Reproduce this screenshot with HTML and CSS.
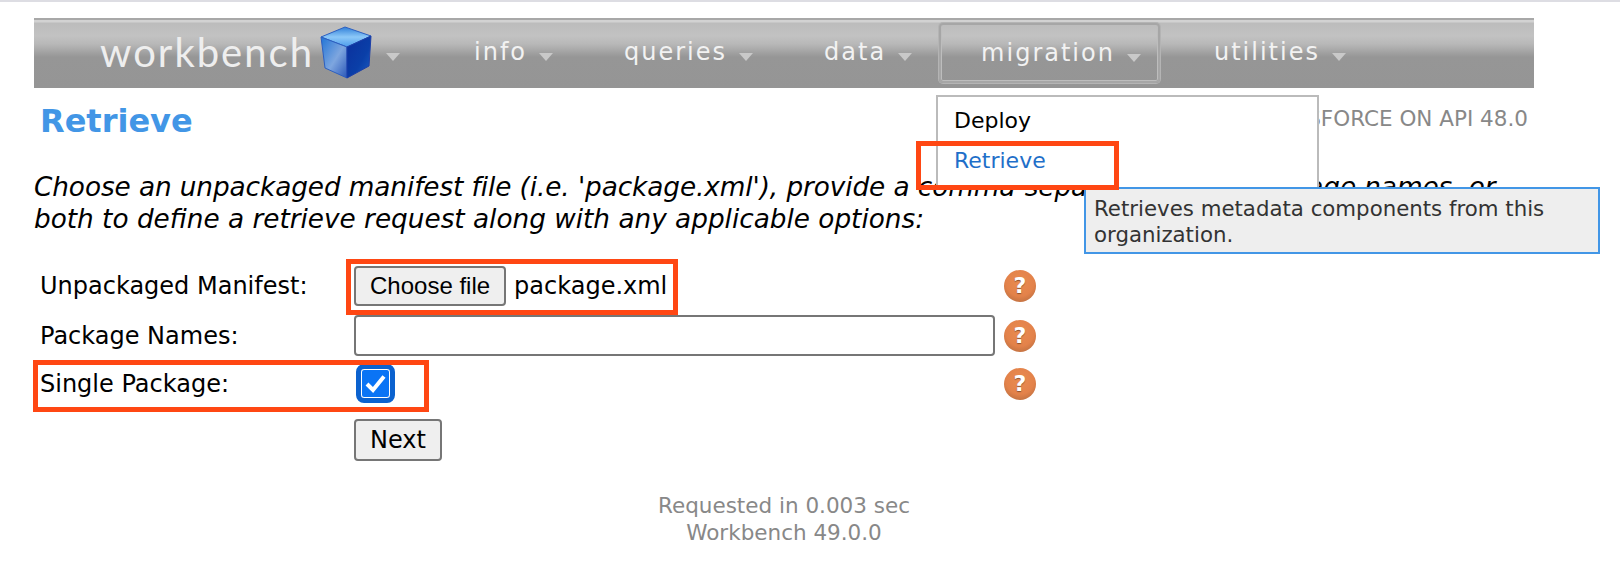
FILE: index.html
```html
<!DOCTYPE html>
<html lang="en">
<head>
  <meta charset="UTF-8">
  <title>Workbench - Retrieve</title>
  <link rel="stylesheet" href="styles.css">
</head>
<body>
  <div class="page">
    <div class="navbar">
      <div class="logo">
        <span class="logo-text">workbench</span>
        <svg class="cube" width="56" height="56" viewBox="0 0 56 56">
          <defs>
            <linearGradient id="cube-top" x1="0" y1="0" x2="0" y2="1">
              <stop offset="0" stop-color="#2f7fd8"/>
              <stop offset="0.5" stop-color="#8cc8f8"/>
              <stop offset="1" stop-color="#4c9cea"/>
            </linearGradient>
            <linearGradient id="cube-left" x1="0" y1="0" x2="1" y2="1">
              <stop offset="0" stop-color="#1f74d6"/>
              <stop offset="0.55" stop-color="#7ea6df"/>
              <stop offset="1" stop-color="#2a57b8"/>
            </linearGradient>
            <linearGradient id="cube-right" x1="0" y1="0" x2="1" y2="1">
              <stop offset="0" stop-color="#0c2f9c"/>
              <stop offset="0.6" stop-color="#0a3fa8"/>
              <stop offset="1" stop-color="#1d5fc4"/>
            </linearGradient>
          </defs>
          <path d="M27 2 L53 11 L29 22 L3 12 Z" fill="url(#cube-top)" stroke="#2d5fc0" stroke-width="1"/>
          <path d="M3 12 L29 22 L29 53 L7 43 Z" fill="url(#cube-left)" stroke="#2d5fc0" stroke-width="1"/>
          <path d="M29 22 L53 11 L51 41 L29 53 Z" fill="url(#cube-right)" stroke="#1d3fa8" stroke-width="1"/>
        </svg>
        <span class="arrow"></span>
      </div>
      <div class="nav-item">info<span class="arrow"></span></div>
      <div class="nav-item">queries<span class="arrow"></span></div>
      <div class="nav-item">data<span class="arrow"></span></div>
      <div class="nav-item active">migration<span class="arrow"></span></div>
      <div class="nav-item">utilities<span class="arrow"></span></div>
    </div>

    <div class="menu">
      <div class="menu-item">Deploy</div>
      <div class="menu-item selected">Retrieve</div>
    </div>
    <div class="tooltip">Retrieves metadata components from this organization.</div>

    <div class="title-row">
      <h1>Retrieve</h1>
      <div class="login-info">SALESFORCE ON API 48.0</div>
    </div>

    <p class="intro"><span class="intro-first">Choose an unpackaged manifest file (i.e. 'package.xml'), provide a comma-separated list of package names, or</span> both to define a retrieve request along with any applicable options:</p>

    <form class="retrieve-form">
      <label>Unpackaged Manifest:</label>
      <div class="file-field">
        <button type="button" class="btn choose-btn">Choose file</button>
        <span>package.xml</span>
      </div>
      <span class="help">?</span>

      <label>Package Names:</label>
      <input type="text" class="text-input">
      <span class="help">?</span>

      <label>Single Package:</label>
      <div>
        <span class="checkbox">
          <svg width="25" height="25" viewBox="0 0 25 25"><path d="M4 13 L10 19 L21 5.5" fill="none" stroke="#fff" stroke-width="4"/></svg>
        </span>
      </div>
      <span class="help">?</span>

      <div class="row-next"><button type="button" class="btn next-btn">Next</button></div>
    </form>

    <div class="footer">
      <div>Requested in 0.003 sec</div>
      <div>Workbench 49.0.0</div>
    </div>

    <div class="callout callout-menu"></div>
    <div class="callout callout-file"></div>
    <div class="callout callout-single"></div>
  </div>
</body>
</html>
```

FILE: styles.css
```css
body {
  margin: 0;
  border-top: 2px solid #dddde3;
  font-family: "DejaVu Sans", sans-serif;
  font-size: 24px;
  color: #000;
  background: #fff;
}
.page {
  position: relative;
  width: 1500px;
  height: 570px;
  margin-left: 34px;
}
.navbar {
  position: relative;
  top: 16px;
  display: flex;
  height: 70px;
  box-sizing: border-box;
  border-top: 2px solid #a8a8a8;
  color: #f2f2f2;
  font-size: 24px;
  letter-spacing: 2px;
  background: linear-gradient(#d2d2d2 0, #d2d2d2 2px, #bcbcbc 3px, #c2c2c2 16px, #b8b8b8 24px, #969696 37px, #959595 100%);
}
.logo {
  display: flex;
  align-items: center;
  width: 396px;
  padding-left: 66px;
  padding-bottom: 4px;
  box-sizing: border-box;
}
.logo-text {
  font-family: Lato, sans-serif;
  font-weight: 400;
  font-size: 40px;
  letter-spacing: 2px;
  color: #eee;
}
.cube {
  margin-left: 4px;
  margin-top: 2px;
}
.logo .arrow {
  margin-left: 12px;
}
.nav-item {
  display: flex;
  align-items: center;
  gap: 12px;
  padding: 0 17px 4px 44px;
  margin-right: 10px;
}
.nav-item.active {
  margin: 3px 10px 5px 0;
  padding: 0 17px 0 40px;
  border: 2px solid #a6a6a6;
  border-radius: 4px;
  box-shadow: inset 0 0 0 1px #bdbdbd, 0 0 0 1px #b4b4b4;
}
.arrow {
  display: inline-block;
  margin-top: 10px;
  border-left: 7px solid transparent;
  border-right: 7px solid transparent;
  border-top: 8px solid #c9c9c9;
}
.title-row {
  display: flex;
  justify-content: space-between;
  margin-top: 31px;
  padding: 0 6px;
}
h1 {
  margin: 0;
  font-size: 32px;
  line-height: 36px;
  color: #4296e6;
}
.login-info {
  font-size: 21.5px;
  line-height: 32px;
  color: #888;
}
.intro {
  margin: 32px 0 0 0;
  width: 1480px;
  font-style: italic;
  font-size: 26.3px;
  line-height: 32px;
}
.intro-first {
  letter-spacing: -0.08px;
}
.retrieve-form {
  display: grid;
  grid-template-columns: 320px 650px 32px;
  grid-template-rows: 51px 50px 45px 67px;
  align-items: center;
  margin-top: 25px;
}
.retrieve-form label {
  padding-left: 6px;
}
.row-next {
  grid-column: 2;
}
.file-field {
  display: flex;
  align-items: center;
  gap: 8px;
}
.btn {
  box-sizing: border-box;
  height: 40px;
  padding: 0 14px;
  border: 2px solid #767676;
  border-radius: 4px;
  background: #efefef;
  font-family: "Liberation Sans", sans-serif;
  font-size: 24px;
  color: #000;
}
.next-btn {
  height: 42px;
  font-family: "DejaVu Sans", sans-serif;
}
.text-input {
  box-sizing: border-box;
  width: 641px;
  height: 41px;
  margin-bottom: 2px;
  border: 2px solid #767676;
  border-radius: 4px;
  background: #fff;
}
.checkbox {
  display: flex;
  align-items: center;
  justify-content: center;
  width: 27px;
  height: 27px;
  margin-left: 7px;
  border: 1px solid #fff;
  border-radius: 3px;
  outline: 5px solid #0b62cf;
  background: #0a74f5;
}
.help {
  display: block;
  width: 32px;
  height: 32px;
  border-radius: 50%;
  background: radial-gradient(circle at 50% 38%, #e98c50 0, #e3824a 55%, #a9663c 100%);
  color: #fff;
  font-weight: bold;
  font-size: 22px;
  line-height: 32px;
  text-align: center;
  text-shadow: 0 1px 1px #8a5030;
}
.footer {
  margin-top: 19px;
  text-align: center;
  color: #888;
  font-size: 21.5px;
  line-height: 27px;
}
.menu {
  position: absolute;
  left: 902px;
  top: 93px;
  width: 383px;
  height: 94px;
  box-sizing: border-box;
  padding: 4px 16px;
  border: 2px solid #bbb;
  background: #fff;
  z-index: 1;
}
.menu-item {
  font-size: 22px;
  line-height: 40px;
}
.menu-item.selected {
  color: #1f6fc9;
}
.tooltip {
  position: absolute;
  left: 1050px;
  top: 185px;
  width: 516px;
  height: 67px;
  box-sizing: border-box;
  padding: 7px 8px;
  border: 2px solid #4296e6;
  background: #eee;
  color: #333;
  font-size: 21.3px;
  line-height: 26px;
  z-index: 2;
}
.callout {
  position: absolute;
  box-sizing: border-box;
  border: 5px solid #ff4713;
  z-index: 3;
}
.callout-menu {
  left: 882px;
  top: 139px;
  width: 203px;
  height: 49px;
}
.callout-file {
  left: 312px;
  top: 257px;
  width: 332px;
  height: 56px;
}
.callout-single {
  left: -1px;
  top: 358px;
  width: 396px;
  height: 52px;
}
```
